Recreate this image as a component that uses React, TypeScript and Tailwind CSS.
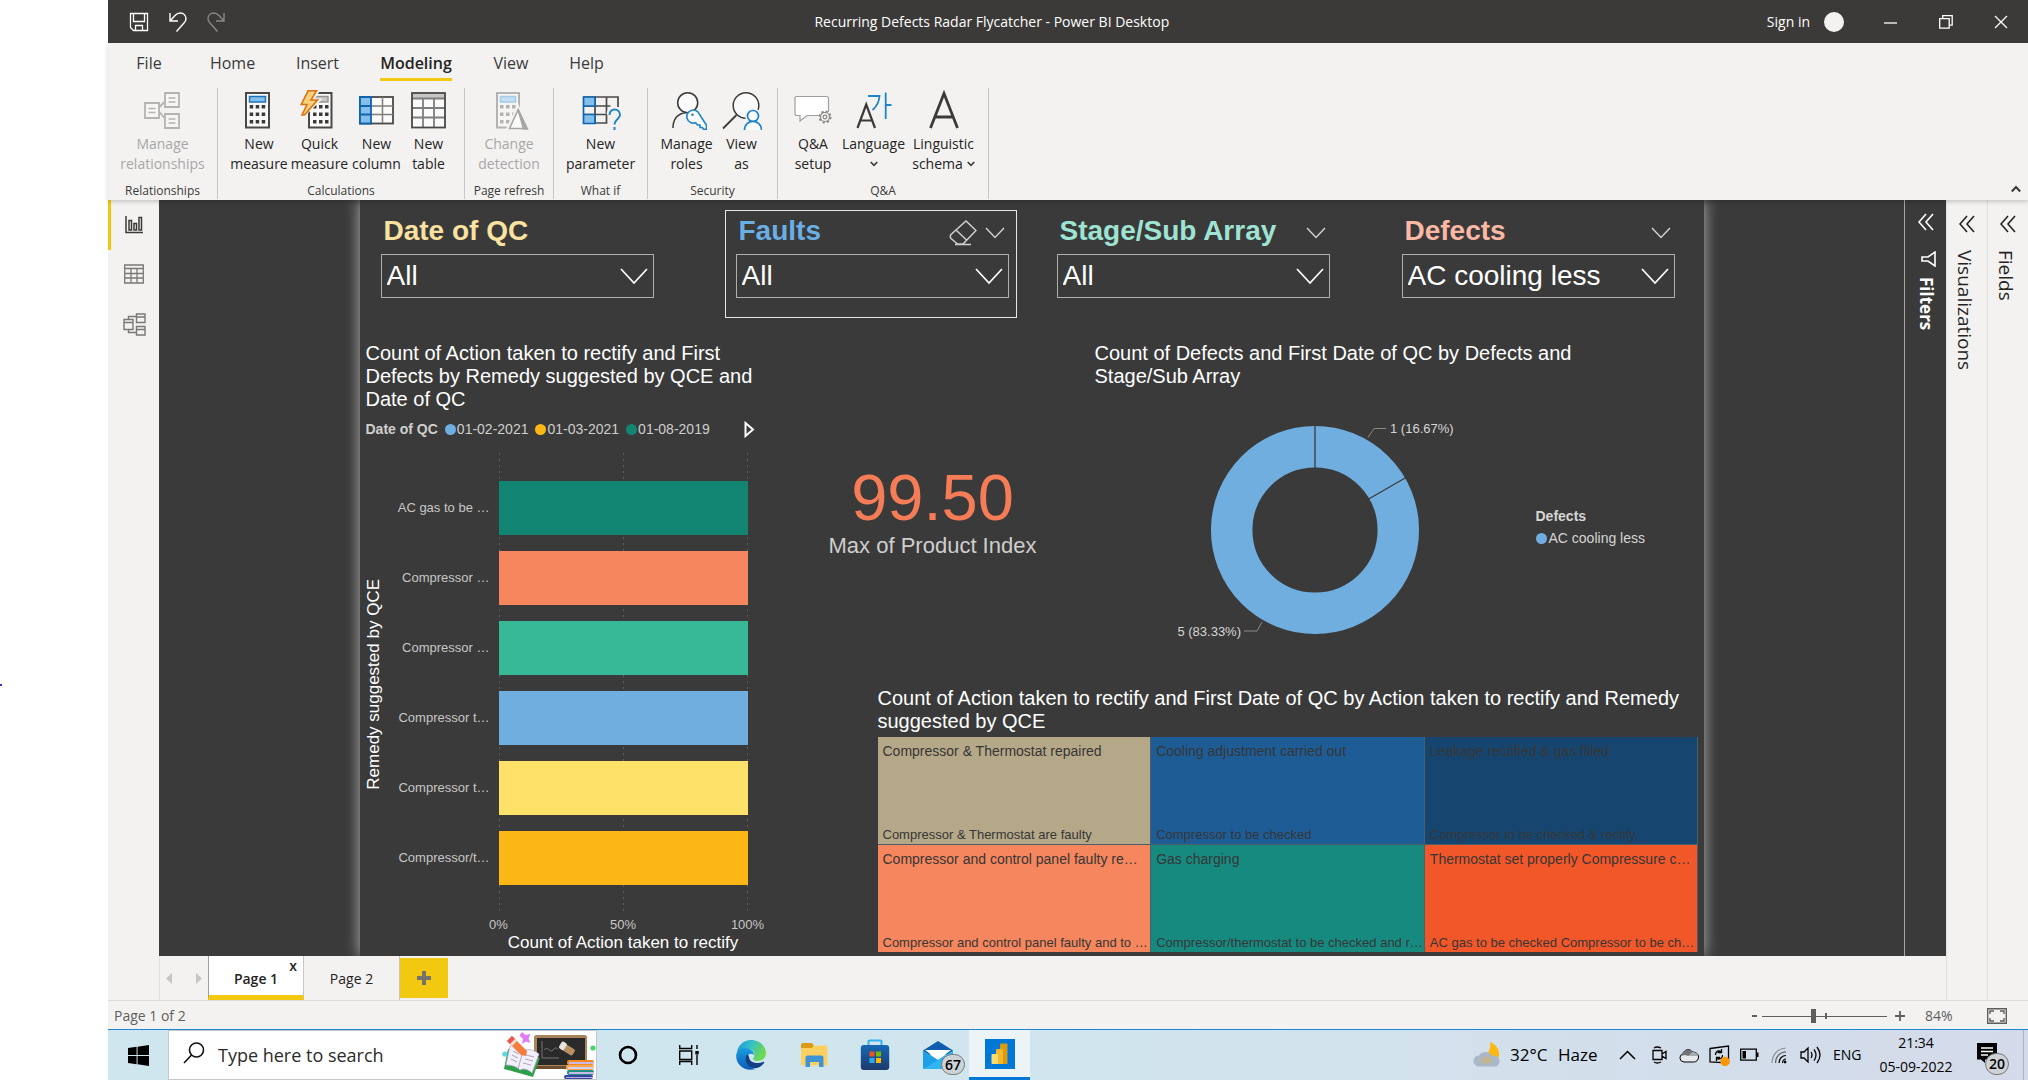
import React from "react";

type Children = { children?: React.ReactNode };

const INK = "#3b3a39";
const BLUE = "#1e84c8";

/* ---------- Title bar ---------- */

function TitleBar() {
  return (
    <header className="grid h-[43px] grid-cols-[705fr_auto_857fr] items-center bg-[#3b3a38] text-white">
      <div className="flex items-center gap-5 pl-[21px]">
        <button aria-label="Save">
          <svg width="20" height="20" viewBox="0 0 20 20" fill="none" stroke="#fff" strokeWidth="1.3">
            <path d="M1.5 1.5h17v17H4.5l-3-3zM4.5 1.5v8h11v-8M6.5 18.5v-5h7v5" />
          </svg>
        </button>
        <button aria-label="Undo">
          <svg width="18" height="20" viewBox="0 0 18 20" fill="none" stroke="#fff" strokeWidth="1.4">
            <path d="M1 1v8h8M1.5 8.5l4.500-5C8 1.300 10 1 11.500 1c3 0 5.500 2.500 5.500 5.500 0 2-.8 3.200-2 4.500l-7.500 8.500" />
          </svg>
        </button>
        <button aria-label="Redo" disabled>
          <svg width="18" height="20" viewBox="0 0 18 20" fill="none" stroke="#8a8886" strokeWidth="1.4">
            <path d="M17 1v8H9M16.500 8.500l-4.500-5C10 1.300 8 1 6.500 1 3.500 1 1 3.500 1 6.500c0 2 .8 3.200 2 4.500l7.500 8.500" />
          </svg>
        </button>
      </div>
      <h1 className="text-sm">Recurring Defects Radar Flycatcher - Power BI Desktop</h1>
      <div className="flex items-center justify-end pr-5">
        <button className="flex items-center gap-3.5 text-sm">
          Sign in
          <span className="size-5 rounded-full bg-[#f3f2f1]" />
        </button>
        <button aria-label="Minimize" className="ml-10">
          <svg width="14" height="14" viewBox="0 0 14 14" stroke="#fff" strokeWidth="1.3"><path d="M0 8h13" /></svg>
        </button>
        <button aria-label="Restore" className="ml-[41px]">
          <svg width="14" height="14" viewBox="0 0 14 14" fill="none" stroke="#fff" strokeWidth="1.3">
            <path d="M.7 3.700h9.500v9.500H.7zM3.700 3.700V.7h9.500v9.500h-3" />
          </svg>
        </button>
        <button aria-label="Close" className="ml-[41px]">
          <svg width="14" height="14" viewBox="0 0 14 14" stroke="#fff" strokeWidth="1.3"><path d="M1 1l12 12M13 1L1 13" /></svg>
        </button>
      </div>
    </header>
  );
}

/* ---------- Ribbon icons ---------- */

function Icon40({ children }: Children) {
  return (
    <svg width="40" height="40" viewBox="0 0 40 40" fill="none" strokeWidth="1.5" className="block">
      {children}
    </svg>
  );
}

function Dots({ x, color }: { x: number; color: string }) {
  return (
    <g fill={color}>
      {[15, 22.5, 30].map((y) =>
        [0, 6, 12].map((dx) => <rect key={`${y}-${dx}`} x={x + dx} y={y} width="3.500" height="3.500" />)
      )}
    </g>
  );
}

const RelationshipsIcon = () => (
  <Icon40>
    <g stroke="#b5b3b1" fill="#f6f5f4" strokeWidth="1.8">
      <path d="M15.500 18l6-6M15.500 21l6 7" />
      <path d="M2 13h14v15H2zM22 3h14v14H22zM22 24h14v14H22z" />
      <path d="M5.500 18.500h7M5.500 22.500h7M25.500 8h7M25.500 12h7M25.500 29h7M25.500 33h7" strokeWidth="1.3" />
    </g>
  </Icon40>
);
const MeasureIcon = () => (
  <Icon40>
    <rect x="7" y="3" width="23" height="34.500" fill="#fafafa" stroke="#4a4947" strokeWidth="2" />
    <rect x="10.500" y="6.500" width="16" height="5.500" fill="#83beec" stroke="#1e72b8" />
    <Dots x={10.7} color={INK} />
  </Icon40>
);
const QuickIcon = () => (
  <Icon40>
    <rect x="9" y="3" width="22.500" height="34.500" fill="#fafafa" stroke="#4a4947" strokeWidth="2" />
    <rect x="13" y="6.500" width="15" height="5.500" fill="#c8c6c4" stroke="#979593" />
    <Dots x={13} color={INK} />
    <path d="M10 0L2 14h7L2 26 18 10.500h-7L17.500 1z" fill="#f3f2f1" stroke="#f3f2f1" strokeWidth="4" />
    <path d="M8 .8L1.300 14.500H7L2 25h2.500L17.500 10H11L16.500 .8z" fill="#fbd07e" stroke="#d9730d" strokeWidth="1.600" />
  </Icon40>
);
const ColumnIcon = () => (
  <Icon40>
    <rect x="3" y="7" width="33" height="26.500" fill="#fafafa" stroke="#4a4947" strokeWidth="1.800" />
    <path d="M25.500 7v26M14 16h22M14 24.500h22" stroke="#807e7c" />
    <path d="M3 7h11v26.500H3zM3 16h11M3 24.500h11" fill="#83beec" stroke="#0f64ad" strokeWidth="1.800" />
  </Icon40>
);
const TableIcon = () => (
  <Icon40>
    <rect x="3" y="3" width="33" height="34.500" fill="#fafafa" />
    <rect x="3" y="3" width="33" height="5.500" fill="#c8c6c4" />
    <path d="M3 8.500h33M3 18h33M3 27.500h33M14 8.500v29M25 8.500v29" stroke="#807e7c" strokeWidth="1.800" />
    <rect x="3" y="3" width="33" height="34.500" stroke="#4a4947" strokeWidth="1.800" />
  </Icon40>
);
const DetectionIcon = () => (
  <Icon40>
    <rect x="8" y="3" width="22" height="34.500" fill="#f6f5f4" stroke="#b5b3b1" strokeWidth="2" />
    <rect x="11.500" y="6.500" width="15" height="5.500" fill="#c5dff2" stroke="#a5cbe6" />
    <Dots x={11} color="#b5b3b1" />
    <path d="M29 13L17 39h22z" fill="#f3f2f1" />
    <path d="M29 20L20.500 38.500H36z" fill="#fafafa" stroke="#a8a6a4" strokeWidth="1.600" />
    <path d="M29 19L38.500 39h-4z" fill="#a8a6a4" stroke="#a8a6a4" />
  </Icon40>
);
const ParameterIcon = () => (
  <Icon40>
    <path d="M2.500 7H37v10M2.500 33H25.500V7M2.500 16h27M2.500 24.500h23M14 7v26" stroke="#4a4947" strokeWidth="1.700" fill="none" />
    <path d="M2.500 7H14v9H2.500zM2.500 24.500H14V33.500H2.500zM2.500 16v9" fill="#83beec" stroke="#0f64ad" strokeWidth="1.700" />
    <path d="M28.500 24.500c0-7 10.500-6.500 10.500 0 0 4-5.500 4.500-5.500 10" stroke="#f3f2f1" strokeWidth="6" />
    <path d="M28.500 25c0-7.500 10.500-7 10.500 0 0 4-5.500 4-5.500 9.500M33.500 37v3" stroke={BLUE} strokeWidth="2" />
  </Icon40>
);
const RolesIcon = () => (
  <Icon40>
    <g transform="translate(3 0)">
      <circle cx="17.700" cy="12.700" r="10" fill="#fafafa" stroke={INK} />
      <path d="M3 38c0-9 5-15 13-15.300" stroke={INK} />
      <path d="M29.500 24.500a6.500 6.500 0 1 0-4 8.200l2 2.300h2.500v2.500h2.500l1 1.800h3v-4z" fill="#fafafa" stroke={BLUE} strokeWidth="1.600" />
      <circle cx="22.500" cy="24.700" r="1.300" fill={BLUE} />
    </g>
  </Icon40>
);
const ViewAsIcon = () => (
  <Icon40>
    <circle cx="24" cy="15.500" r="12.800" fill="#fafafa" stroke={INK} />
    <path d="M14.500 25L1 38.500" stroke={INK} strokeWidth="1.800" />
    <circle cx="31" cy="26" r="8" fill="#f3f2f1" />
    <circle cx="31" cy="26" r="5.500" fill="#fafafa" stroke={BLUE} strokeWidth="1.700" />
    <path d="M22.500 40c0-11.500 17-11.500 17 0" fill="#fafafa" stroke={BLUE} strokeWidth="1.700" />
  </Icon40>
);
const QnaIcon = () => (
  <Icon40>
    <path d="M4 6.500h29.500q2 0 2 2v15q0 2-2 2H14L7 31v-5.500H4q-2 0-2-2v-15q0-2 2-2z" fill="#fff" stroke="#a19f9d" strokeWidth="1.200" />
    <circle cx="32" cy="27" r="6.500" fill="#f3f2f1" />
    <circle cx="32" cy="27" r="5.500" stroke="#8a8886" strokeWidth="2" strokeDasharray="2.160 2.160" />
    <circle cx="32" cy="27" r="4.500" fill="#f3f2f1" stroke="#8a8886" strokeWidth="1.200" />
    <circle cx="32" cy="27" r="1.800" stroke="#8a8886" strokeWidth="1.200" />
  </Icon40>
);
const LanguageIcon = () => (
  <Icon40>
    <path d="M3.500 38L12.200 14.500 21 38M6.500 30.500h11.500" stroke={INK} strokeWidth="2.200" />
    <path d="M14 6H25.500C25 13 22 17 18.500 20M31.700 2.500V29M31.700 15H37.500" stroke={BLUE} strokeWidth="1.800" />
  </Icon40>
);
const LinguisticIcon = () => (
  <Icon40>
    <path d="M6.500 38L20 3.500 33.500 38M11 27h18" stroke={INK} strokeWidth="2.800" />
  </Icon40>
);

const SmallChevron = ({ className = "" }: { className?: string }) => (
  <svg width="8" height="6" viewBox="0 0 8 6" fill="none" stroke={INK} strokeWidth="1.600" className={className}>
    <path d="M.7 1l3.300 3.300L7.300 1" />
  </svg>
);

/* ---------- Ribbon ---------- */

function RibbonGroup({ label, width, children }: Children & { label: string; width: string }) {
  return (
    <section className={`flex flex-col items-center justify-between border-r border-[#c8c6c4] ${width}`}>
      <div className="flex">{children}</div>
      <div className="text-xs leading-4 text-[#3b3a39]">{label}</div>
    </section>
  );
}

function RibbonButton({
  icon, lines, width, disabled, children,
}: Children & { icon: React.ReactNode; lines: string[]; width: string; disabled?: boolean }) {
  return (
    <button
      disabled={disabled}
      className={`flex flex-col items-center text-sm leading-5 whitespace-nowrap ${width} ${disabled ? "text-[#a9a7a5]" : "text-[#252423]"}`}
    >
      <span className="mt-0.5 mb-1">{icon}</span>
      <span>{lines[0]}</span>
      <span className="flex min-h-5 items-center gap-1">
        {lines[1]}
        {children}
      </span>
    </button>
  );
}

function Ribbon() {
  const tabs = [
    { t: "File", c: "w-[82px]" },
    { t: "Home", c: "w-[85px]" },
    { t: "Insert", c: "w-[85px]" },
    { t: "Modeling", c: "w-[112px]", on: true },
    { t: "View", c: "w-[78px]" },
    { t: "Help", c: "w-[73px]" },
  ];
  return (
    <div className="relative z-10 h-[157px] bg-[#f3f2f1] shadow-[0_2px_4px_rgba(0,0,0,0.18)]">
      <nav className="flex h-[45px]">
        {tabs.map((x) => (
          <button key={x.t} className={`flex justify-center pt-1.5 text-base text-[#3b3a39] ${x.c}`}>
            <span className={`h-[32px] pt-0.5 ${x.on ? "border-b-[3px] border-[#f2c811] font-semibold text-[#252423]" : ""}`}>{x.t}</span>
          </button>
        ))}
      </nav>
      <div className="flex h-[112px] pb-px">
        <RibbonGroup label="Relationships" width="w-[110px]">
          <RibbonButton icon={<RelationshipsIcon />} lines={["Manage", "relationships"]} width="w-[100px]" disabled />
        </RibbonGroup>
        <RibbonGroup label="Calculations" width="w-[247px]">
          <RibbonButton icon={<MeasureIcon />} lines={["New", "measure"]} width="w-[61px]" />
          <RibbonButton icon={<QuickIcon />} lines={["Quick", "measure"]} width="w-[60px]" />
          <RibbonButton icon={<ColumnIcon />} lines={["New", "column"]} width="w-[54px]" />
          <RibbonButton icon={<TableIcon />} lines={["New", "table"]} width="w-[50px]" />
        </RibbonGroup>
        <RibbonGroup label="Page refresh" width="w-[89px]">
          <RibbonButton icon={<DetectionIcon />} lines={["Change", "detection"]} width="w-[70px]" disabled />
        </RibbonGroup>
        <RibbonGroup label="What if" width="w-[94px]">
          <RibbonButton icon={<ParameterIcon />} lines={["New", "parameter"]} width="w-[80px]" />
        </RibbonGroup>
        <RibbonGroup label="Security" width="w-[130px]">
          <RibbonButton icon={<RolesIcon />} lines={["Manage", "roles"]} width="w-[58px]" />
          <RibbonButton icon={<ViewAsIcon />} lines={["View", "as"]} width="w-[52px]" />
        </RibbonGroup>
        <RibbonGroup label="Q&A" width="w-[211px]">
          <RibbonButton icon={<QnaIcon />} lines={["Q&A", "setup"]} width="w-[50px]" />
          <RibbonButton icon={<LanguageIcon />} lines={["Language", ""]} width="w-[71px]"><SmallChevron /></RibbonButton>
          <RibbonButton icon={<LinguisticIcon />} lines={["Linguistic", "schema"]} width="w-[69px]"><SmallChevron /></RibbonButton>
        </RibbonGroup>
        <button aria-label="Collapse the ribbon" className="mt-auto mr-[7px] mb-1.5 ml-auto">
          <svg width="10" height="8" viewBox="0 0 10 8" fill="none" stroke={INK} strokeWidth="2"><path d="M.8 6.500L5 2l4.200 4.500" /></svg>
        </button>
      </div>
    </div>
  );
}

/* ---------- Left rail ---------- */

function Rail() {
  return (
    <nav className="flex w-[51px] shrink-0 flex-col bg-[#f3f2f1]">
      <button aria-label="Report view" className="flex h-[50px] items-center border-l-[3px] border-[#f2c811] pl-[14px]">
        <svg width="18" height="18" viewBox="0 0 18 18" fill="none" stroke={INK} strokeWidth="1.500">
          <path d="M1 0v16.500h17M4 4.500h2.500v9.500H4zM9 7.500h2.500V14H9zM14 1.500h2.500V14H14z" />
        </svg>
      </button>
      <button aria-label="Data view" className="flex h-[48px] items-center pl-4">
        <svg width="20" height="20" viewBox="0 0 20 20" fill="none" stroke="#7a7876" strokeWidth="1.300">
          <path d="M.7 1h18.600v18H.7zM.7 4.500h18.600M.7 9.500h18.600M.7 14h18.600M7 4.500V19M13 4.500V19" />
        </svg>
      </button>
      <button aria-label="Model view" className="flex h-[53px] items-center pl-[15px]">
        <svg width="23" height="23" viewBox="0 0 23 23" fill="none" stroke="#7a7876" strokeWidth="1.400">
          <path d="M1 6.500h9v10H1zM1 9.500h9M13.500 1H22v8.500h-8.500zM13.500 4H22M13.500 13.500H22V22h-8.500zM13.500 16.500H22M5.500 6.500v-3h8M5.500 16.500v3h8" />
        </svg>
      </button>
    </nav>
  );
}

/* ---------- Report canvas ---------- */

function Slicer({ title, color, value, className, selected, menu = true }: {
  title: string; color: string; value: string; className: string; selected?: boolean; menu?: boolean;
}) {
  const id = title.replace(/\W/g, "");
  return (
    <section className={`h-[108px] w-[292px] shrink-0 border pr-[7px] pl-2.5 ${selected ? "border-[#e6e6e6]" : "border-transparent"} ${className}`}>
      <div className="flex h-[43px] items-center pr-1 pb-1 pl-[3px]">
        <label htmlFor={id} className={`text-[28px] leading-8 font-bold ${color}`}>{title}</label>
        <span className="ml-auto flex items-center gap-2 pt-1">
          {selected && (
            <button aria-label="Clear selections">
              <svg width="28" height="26" viewBox="0 0 28 26" fill="none" stroke="#d0cfce" strokeWidth="1.500">
                <path d="M8.500 24L2 18.500q-1.500-2 0-4L17 1l10 9.500L14 24zM7.500 10.500l10 9.500M6 24.500h16" />
              </svg>
            </button>
          )}
          {menu && (
            <button aria-label="More options">
              <svg width="20" height="12" viewBox="0 0 20 12" fill="none" stroke="#d0cfce" strokeWidth="1.500"><path d="M1 1l9 9.500L19 1" /></svg>
            </button>
          )}
        </span>
      </div>
      <div className="relative h-[44px]">
        <select id={id} className="h-full w-full appearance-none border border-[#b0afae] bg-transparent pl-[5px] text-[28px] leading-8 text-white">
          <option>{value}</option>
        </select>
        <svg width="28" height="17" viewBox="0 0 28 17" fill="none" stroke="#fff" strokeWidth="1.700" className="pointer-events-none absolute top-3.5 right-1.5">
          <path d="M1 1l13 14L27 1" />
        </svg>
      </div>
    </section>
  );
}

const bars = [
  { label: "AC gas to be …", bg: "bg-[#118472]" },
  { label: "Compressor …", bg: "bg-[#f5865d]" },
  { label: "Compressor …", bg: "bg-[#37b897]" },
  { label: "Compressor t…", bg: "bg-[#70aee0]" },
  { label: "Compressor t…", bg: "bg-[#fde168]" },
  { label: "Compressor/t…", bg: "bg-[#fcb714]" },
];

function BarChart() {
  return (
    <section className="w-[405px] shrink-0 pl-1.5">
      <h2 className="text-[20px] leading-[23px] text-white">
        Count of Action taken to rectify and First<br />Defects by Remedy suggested by QCE and<br />Date of QC
      </h2>
      <div className="mt-2 flex h-5 items-center text-sm text-[#cfcecd]">
        <b>Date of QC</b>
        {[["01-02-2021", "bg-[#70aee0]"], ["01-03-2021", "bg-[#fcb714]"], ["01-08-2019", "bg-[#118472]"]].map(([d, c]) => (
          <span key={d} className="ml-[7px] flex items-center gap-px">
            <i className={`size-[11px] rounded-full ${c}`} />{d}
          </span>
        ))}
        <button aria-label="Next legend items" className="mr-2.5 ml-auto">
          <svg width="11" height="17" viewBox="0 0 11 17" fill="none" stroke="#fff" strokeWidth="2"><path d="M1.500 2v13L9 8.500z" /></svg>
        </button>
      </div>
      <div className="mt-[14px] flex h-[459px]">
        <div className="flex w-[17px] items-center justify-center pt-1">
          <span className="rotate-180 text-[17px] leading-5 whitespace-nowrap text-white [writing-mode:vertical-rl]">Remedy suggested by QCE</span>
        </div>
        <ul className="flex w-[107px] flex-col gap-4 pt-7 text-right text-[13px] text-[#c8c7c6]">
          {bars.map((b, i) => <li key={i} className="flex h-[54px] items-center justify-end">{b.label}</li>)}
        </ul>
        <div className="relative ml-[9px] flex w-[249px] flex-col gap-4 pt-7">
          <div className="absolute inset-0 flex justify-between">
            {[0, 50, 100].map((p) => (
              <i key={p} className="w-px [background:repeating-linear-gradient(#5c5c5c_0_2px,transparent_2px_6px)]" />
            ))}
          </div>
          {bars.map((b, i) => <div key={i} className={`relative h-[54px] ${b.bg}`} />)}
        </div>
      </div>
      <div className="mt-1 ml-[113px] flex w-[289px] justify-between text-[13px] leading-[18px] text-[#c8c7c6]">
        {["0%", "50%", "100%"].map((t) => <span key={t} className="w-10 text-center">{t}</span>)}
      </div>
      <div className="ml-[133px] w-[249px] text-center text-[17px] leading-[18px] text-white">Count of Action taken to rectify</div>
    </section>
  );
}

function Donut() {
  return (
    <svg width="290" height="230" viewBox="0 0 290 230" className="shrink-0">
      <circle cx="145" cy="114" r="83.300" fill="none" stroke="#70aee0" strokeWidth="41.500" />
      <path d="M145 10v43M198.700 83L236 61.500" stroke="#3a3a3a" strokeWidth="1.300" />
      <path d="M198 21.500l6-9h12M92 206l-5 9H74" fill="none" stroke="#8a8988" />
      <g fontSize="13" fill="#d6d5d4">
        <text x="220" y="17">1 (16.67%)</text>
        <text x="71" y="220" textAnchor="end">5 (83.33%)</text>
      </g>
    </svg>
  );
}

const tiles = [
  { a: "Compressor & Thermostat repaired", b: "Compressor & Thermostat are faulty", bg: "bg-[#b5a888]" },
  { a: "Cooling adjustment carried out", b: "Compressor to be checked", bg: "bg-[#1e5c96]" },
  { a: "Leakage rectified & gas filled", b: "Compressor to be checked & rectify", bg: "bg-[#164670]" },
  { a: "Compressor and control panel faulty re…", b: "Compressor and control panel faulty and to …", bg: "bg-[#f5865d]" },
  { a: "Gas charging", b: "Compressor/thermostat to be checked and r…", bg: "bg-[#178a80]" },
  { a: "Thermostat set properly Compressure c…", b: "AC gas to be checked Compressor to be ch…", bg: "bg-[#f2572a]" },
];

function Report() {
  return (
    <div className="mx-auto w-full max-w-[1344px] bg-[#3a3a3a] pt-2.5 font-['Liberation_Sans',Arial,sans-serif] shadow-[0_0_14px_rgba(190,190,190,0.95)]">
      <div className="flex">
        <Slicer title="Date of QC" color="text-[#fbe2a0]" value="All" className="ml-2.5" menu={false} />
        <Slicer title="Faults" color="text-[#6aaee4]" value="All" className="ml-[63px]" selected />
        <Slicer title="Stage/Sub Array" color="text-[#9fe3d3]" value="All" className="ml-[29px]" />
        <Slicer title="Defects" color="text-[#fbb9a5]" value="AC cooling less" className="ml-[53px]" />
      </div>
      <div className="mt-6 flex">
        <BarChart />
        <div className="flex min-w-0 flex-1 flex-col">
          <div className="flex h-[345px]">
            <section className="w-[330px] shrink-0 pt-[124px] pl-1.5 text-center">
              <p className="text-[65px] leading-[64px] text-[#f47c57]">99.50</p>
              <p className="mt-0.5 text-[22px] leading-7 text-[#cfcecd]">Max of Product Index</p>
            </section>
            <section className="min-w-0 flex-1">
              <h2 className="text-[20px] leading-[23px] whitespace-nowrap text-white">
                Count of Defects and First Date of QC by Defects and<br />Stage/Sub Array
              </h2>
              <div className="mt-7 flex pl-[75px]">
                <Donut />
                <div className="ml-[76px] pt-[89px] text-sm leading-[22px] whitespace-nowrap text-[#d6d5d4]">
                  <b>Defects</b>
                  <div className="flex items-center gap-0.5"><i className="size-[11px] rounded-full bg-[#70aee0]" />AC cooling less</div>
                </div>
              </div>
            </section>
          </div>
          <section className="mr-1.5 ml-[113px]">
            <h2 className="text-[20px] leading-[23px] whitespace-nowrap text-white">
              Count of Action taken to rectify and First Date of QC by Action taken to rectify and Remedy<br />suggested by QCE
            </h2>
            <div className="mt-1 grid grid-cols-3 gap-px bg-[#4a5f68]">
              {tiles.map((t) => (
                <div key={t.a} className={`flex h-[107px] min-w-0 flex-col justify-between px-[5px] pt-1 whitespace-nowrap text-[#363636] ${t.bg}`}>
                  <span className="text-sm leading-5">{t.a}</span>
                  <span className="text-[13px] leading-[18px]">{t.b}</span>
                </div>
              ))}
            </div>
          </section>
        </div>
      </div>
    </div>
  );
}

/* ---------- Collapsed panes ---------- */

const DoubleChevron = () => (
  <svg width="16" height="18" viewBox="0 0 16 18" fill="none" stroke="currentColor" strokeWidth="1.600">
    <path d="M8 1L1 9l7 8M15 1L8 9l7 8" />
  </svg>
);

function SidePane({ name }: { name: string }) {
  return (
    <button className="flex w-[41px] shrink-0 flex-col items-center border-l border-[#e1dfdd] bg-[#f3f2f1] pt-[15px] text-[#252423]">
      <DoubleChevron />
      <span className="mt-[17px] mr-1 text-[19px] leading-6 font-medium [writing-mode:vertical-rl]">{name}</span>
    </button>
  );
}

/* ---------- Page tabs and status bar ---------- */

function PageTabs() {
  return (
    <div className="flex h-[44px] border-l border-[#e1dfdd] bg-[#f3f2f1] text-sm text-[#252423]">
      <div className="flex w-12 items-center justify-between px-1.5">
        <button aria-label="Previous page"><svg width="6" height="11" viewBox="0 0 6 11"><path d="M6 0v11L0 5.500z" fill="#c8c6c4" /></svg></button>
        <button aria-label="Next page"><svg width="6" height="11" viewBox="0 0 6 11"><path d="M0 0v11l6-5.500z" fill="#c8c6c4" /></svg></button>
      </div>
      <div className="relative flex w-24 border-r border-b-[5px] border-l border-r-[#c8c6c4] border-b-[#f2c811] border-l-[#a19f9d] bg-white">
        <button className="w-full pt-1.5 font-semibold">Page 1</button>
        <button aria-label="Delete page" className="absolute top-0.5 right-1.5 text-sm leading-4 font-semibold">x</button>
      </div>
      <button className="w-[96px] border-r border-[#c8c6c4] pt-px">Page 2</button>
      <button aria-label="New page" className="mt-0.5 flex h-10 w-12 items-center justify-center bg-[#f2c811]">
        <svg width="14" height="14" viewBox="0 0 14 14" stroke="#75736c" strokeWidth="4"><path d="M0 7h14M7 0v14" /></svg>
      </button>
    </div>
  );
}

function StatusBar() {
  return (
    <div className="flex h-[29px] items-center border-t border-[#dddbd9] bg-[#f3f2f1] pt-0.5 pr-[21px] pl-1.5 text-sm text-[#605e5c]">
      <span>Page 1 of 2</span>
      <button aria-label="Zoom out" className="ml-auto flex h-4 w-3 items-center justify-center">
        <i className="h-0.5 w-[5px] bg-[#605e5c]" />
      </button>
      <div className="relative mx-0.5 flex h-4 w-[125px] items-center">
        <input
          type="range" aria-label="Zoom" min="0" max="100" defaultValue="41"
          className="h-4 w-full appearance-none bg-transparent [&::-webkit-slider-runnable-track]:h-px [&::-webkit-slider-runnable-track]:bg-[#605e5c] [&::-webkit-slider-thumb]:-mt-[7px] [&::-webkit-slider-thumb]:h-[14px] [&::-webkit-slider-thumb]:w-[5px] [&::-webkit-slider-thumb]:appearance-none [&::-webkit-slider-thumb]:bg-[#605e5c]"
        />
        <i className="pointer-events-none absolute left-1/2 h-1.5 w-0.5 bg-[#605e5c]" />
      </div>
      <button aria-label="Zoom in" className="ml-1.5">
        <svg width="10" height="10" viewBox="0 0 10 10" stroke="#605e5c" strokeWidth="1.800"><path d="M0 5h10M5 0v10" /></svg>
      </button>
      <span className="ml-5 w-[31px]">84%</span>
      <button aria-label="Fit to page" className="ml-[31px]">
        <svg width="20" height="16" viewBox="0 0 20 16" fill="none" stroke="#605e5c" strokeWidth="1.400">
          <path d="M.7.7h18.600v14.600H.7zM3 6V3h4M13 3h4v3M17 10v3h-4M7 13H3v-3" />
        </svg>
      </button>
    </div>
  );
}

/* ---------- Taskbar ---------- */

const SearchArt = () => (
  <svg width="94" height="48" viewBox="0 0 94 48" className="shrink-0">
    <rect x="32" y="4" width="53" height="34" rx="2.500" fill="#a9845a" />
    <rect x="32" y="35" width="53" height="3" rx="1" fill="#6e4f2d" />
    <rect x="35" y="7" width="48" height="27" fill="#2a2a2a" />
    <path d="M40 10v17h17M42 19c4-5 6 4 9 0s4-1 5-1" stroke="#777" fill="none" />
    <g transform="rotate(32 66 18)"><rect x="60" y="15" width="13" height="7" rx="1.500" fill="#b98f5f" /><rect x="57" y="14" width="6" height="8" rx="2" fill="#e7e2da" /></g>
    <path d="M6 18L38 27 31 46 2 38z" fill="#2f9e4b" />
    <path d="M8 15c5-1 10 1 13 5 5-3 11-1 16 3l-7 19c-4-4-9-5-12-3-4-4-9-5-14-5z" fill="#f3effa" stroke="#b9add0" strokeWidth=".8" />
    <path d="M21 20l-5 18M11 20l6 3M10 24l6 3M9 28l6 3M24 24l8 2M23 28l8 2M21 32l8 2" stroke="#a59bb8" strokeWidth=".9" fill="none" />
    <path d="M5 10l5-5 15 15-1 5-5-1z" fill="#f47c3c" />
    <path d="M5 10l5-5 3 3-5 5z" fill="#f05252" />
    <path d="M8 13l5-5 2 2-5 5z" fill="#fbe0cf" />
    <path d="M20 1l3.500 3 5-1-2 4.500 2 4.500-4.500-1.500-4 2.500 1-5-3.500-3.500z" fill="#e07cf5" />
    <circle cx="2.800" cy="23" r="2.600" fill="#5fd6ea" />
    <circle cx="91" cy="17" r="2.600" fill="#49d36c" />
    <rect x="65" y="29" width="27" height="5" rx="2" fill="#f08a24" /><rect x="67" y="31" width="25" height="2" fill="#cbb8e8" />
    <rect x="64" y="34" width="28" height="5" rx="2" fill="#f9a94b" /><rect x="66" y="36" width="26" height="2" fill="#d9cdf0" />
    <rect x="65" y="39" width="27" height="5" rx="2" fill="#1f8f84" /><rect x="67" y="41" width="25" height="2" fill="#cbb8e8" />
    <rect x="62" y="44" width="29" height="4" rx="2" fill="#39459c" /><rect x="64" y="46" width="27" height="1" fill="#b4b0e0" />
  </svg>
);

const EdgeIcon = () => (
  <svg width="30" height="30" viewBox="0 0 30 30">
    <defs>
      <linearGradient id="e1" x1="0" y1="0" x2="1" y2=".4"><stop offset="0" stopColor="#1f8fd6" /><stop offset=".5" stopColor="#35c1c8" /><stop offset="1" stopColor="#6ed94e" /></linearGradient>
      <linearGradient id="e2" x1="0" y1="0" x2="0" y2="1"><stop offset="0" stopColor="#1b9de2" /><stop offset="1" stopColor="#0d5cb8" /></linearGradient>
    </defs>
    <path d="M1 12C2 5 8 0 15 0c8.500 0 15 6 15 13 0 5-4 8-8.500 8-4 0-5-1.500-4-3 2-3 1-8-5-9C7 8 3 9.500 1 12z" fill="url(#e1)" />
    <path d="M.2 15C1 10 5 7.500 10 8c5 .5 8 4 8 7-2-2-5-1.500-6.500 1-2.500 5 2 12 8 13C9 32-.5 25 .2 15z" fill="url(#e2)" />
    <path d="M11.500 14.500C8 17 9 26 17 28c5 .8 8.500-1.500 11-5 .6-.9 0-1.500-1-1-4.500 2-12 1-13.500-3-.7-2-.5-3.500-2-4.500z" fill="#123f86" />
  </svg>
);

const FolderIcon = () => (
  <svg width="28" height="26" viewBox="0 0 28 26">
    <path d="M1 3q0-2 2-2h9l2 3-2 3H1z" fill="#dc9b12" />
    <path d="M1 6h11l2-2.500h12q1.500 0 1.500 1.500v17q0 1.500-1.500 1.500H2.500Q1 23.500 1 22z" fill="#fdd161" />
    <path d="M5.500 25V15.500q0-2 2-2h14q2 0 2 2V25h-4.500v-5h-9v5z" fill="#3f93d5" />
  </svg>
);

const StoreIcon = () => (
  <svg width="30" height="32" viewBox="0 0 30 32">
    <defs><linearGradient id="s1" x1="0" y1="0" x2="0" y2="1"><stop offset="0" stopColor="#1668b5" /><stop offset="1" stopColor="#1d3a6b" /></linearGradient></defs>
    <path d="M8.500 6V2.500q0-1 1-1h11q1 0 1 1V6" fill="none" stroke="#35b1ee" strokeWidth="2" />
    <rect x=".8" y="6" width="28.400" height="25" rx="3" fill="url(#s1)" />
    <path d="M9.500 12.500h5v5h-5z" fill="#f25022" /><path d="M16 12.500h5v5h-5z" fill="#7fba00" />
    <path d="M9.500 19h5v5h-5z" fill="#2fa9ee" /><path d="M16 19h5v5h-5z" fill="#ffb900" />
  </svg>
);

function CountBadge({ n, className }: { n: string; className: string }) {
  return (
    <span className={`absolute flex items-center justify-center rounded-full border border-[#777] bg-[#cdd2d6] text-sm leading-4 font-semibold text-black ${className}`}>{n}</span>
  );
}

function Taskbar() {
  return (
    <footer className="flex h-[51px] items-stretch border-t border-[#1988d4] bg-linear-to-r from-[#cfe6ee] via-[#d0e5ee] to-[#d4dae9] text-black">
      <button aria-label="Start" className="flex w-[60px] items-center justify-center">
        <svg width="21" height="21" viewBox="0 0 22 22"><path d="M0 3.200l9-1.300v8.600H0zM10 1.800L22 0v10.500H10zM0 11.500h9v8.600l-9-1.300zM10 11.500h12V22l-12-1.800z" /></svg>
      </button>
      <div className="flex w-[429px] items-center border border-[#c4c8ca] bg-white pl-3.5">
        <svg width="22" height="22" viewBox="0 0 22 22" fill="none" stroke="#111" strokeWidth="1.600" className="mb-1 shrink-0">
          <circle cx="13.500" cy="8" r="7" /><path d="M8.500 13L1 21" />
        </svg>
        <input aria-label="Search" placeholder="Type here to search" className="ml-[13px] w-0 flex-1 text-[18px] outline-none placeholder:text-[#2b2b2b]" />
        <SearchArt />
      </div>
      <button aria-label="Cortana" className="flex w-[62px] items-center justify-center">
        <svg width="20" height="20" viewBox="0 0 20 20" fill="none" stroke="#000" strokeWidth="2.600"><circle cx="10" cy="10" r="8" /></svg>
      </button>
      <button aria-label="Task view" className="flex w-[60px] items-center justify-center">
        <svg width="20" height="20" viewBox="0 0 20 20" fill="none" stroke="#000" strokeWidth="1.400">
          <path d="M.7 0v3.500h12V0M.7 6h12v8.500H.7zM.7 20v-3.500h12V20M18 0v4M18 10v10" /><path d="M18 6v3.500" strokeWidth="3.400" />
        </svg>
      </button>
      <button aria-label="Edge" className="flex w-[64px] items-center justify-center"><EdgeIcon /></button>
      <button aria-label="File Explorer" className="flex w-[61px] items-center justify-center"><FolderIcon /></button>
      <button aria-label="Store" className="flex w-[62px] items-center justify-center"><StoreIcon /></button>
      <button aria-label="Mail" className="relative flex w-[63px] items-center justify-center">
        <svg width="30" height="28" viewBox="0 0 30 28">
          <path d="M0 9.500L15 0l15 9.500v4H0z" fill="#0f5fae" /><path d="M2 9h26L15 19z" fill="#fff" />
          <path d="M0 9.500L15 19 30 9.500V27q0 1-1 1H1q-1 0-1-1z" fill="#1f9fe6" /><path d="M0 28l15-9L30 9.500V27q0 1-1 1z" fill="#2fb5f2" />
        </svg>
        <CountBadge n="67" className="top-6 right-1 h-[21px] w-6" />
      </button>
      <button aria-label="Power BI Desktop" className="flex w-[61px] items-center justify-center border-b-[3px] border-[#0078d7] bg-[#ecf4f8]">
        <svg width="30" height="30" viewBox="0 0 30 30">
          <path d="M0 0h30v30H0z" fill="#0078d7" />
          <path d="M15 5.500q0-1 1-1h5.500q1 0 1 1V25H15z" fill="#dc9a10" />
          <path d="M11 11q0-1 1-1h5q1 0 1 1v14h-7z" fill="#f2b92a" />
          <path d="M6.500 16q0-1 1-1H12q1 0 1 1v9H7.500q-1 0-1-1z" fill="#fbdc6a" />
        </svg>
      </button>

      <div className="ml-auto flex items-center text-[17px]">
        <button className="flex items-center">
          <svg width="27" height="26" viewBox="0 0 27 26">
            <path d="M17 0c6 2 10 8 9 14-1 4-3 6-7 8l-7-9c4-2 6-7 5-13z" fill="#fdb913" />
            <path d="M6 24.500a5.500 5.500 0 0 1 0-11C8 9 17 8.500 19 14c5-1 8 2.500 7.500 6s-3 4.500-6 4.500z" fill="#a9b7c9" />
            <path d="M7 18c3-5 11-5 13 0-2 5-10 6-13 0z" fill="#c9b583" opacity=".7" />
          </svg>
          <span className="ml-[10px] w-12 text-left">32°C</span>
          <span className="w-[46px] text-left">Haze</span>
        </button>
        <button aria-label="Show hidden icons" className="ml-[15px]">
          <svg width="17" height="10" viewBox="0 0 17 10" fill="none" stroke="#000" strokeWidth="1.500"><path d="M1 9l7.500-7.500L16 9" /></svg>
        </button>
        <svg width="15" height="18" viewBox="0 0 15 18" fill="none" stroke="#000" strokeWidth="1.300" className="ml-4">
          <path d="M1 4.500h9v9H1zM10 8l4-2.500v7L10 10M2 2q3-2 7 0M2 16q3 2 7 0" />
        </svg>
        <svg width="20" height="15" viewBox="0 0 20 15" className="ml-3" stroke="#000" strokeWidth="1">
          <path d="M5 14a4.300 4.300 0 0 1-1-8.400C5 1.500 11 0 13.500 4c3.500 0 6 2 6 5s-2 5-5 5z" fill="#e7e9ec" />
          <path d="M1.500 8C4 1.500 11 0 13.500 4l-4 4-3.500-1z" fill="#6f7276" stroke="none" />
          <path d="M9.500 8l4-4c3 0 5 1.500 5.500 4z" fill="#a9acb0" stroke="none" />
        </svg>
        <svg width="22" height="21" viewBox="0 0 22 21" fill="none" stroke="#000" strokeWidth="1.300" className="ml-2.5">
          <path d="M1 3.500L19.500 1v17L1 17zM6.500 10q0-4 4-4l2 1M12.500 4v3.500H9M13.500 10q0 4-4 4l-2-1M7.500 16v-3.500H11" />
          <circle cx="16" cy="16.500" r="4.700" fill="#ff9500" stroke="none" />
        </svg>
        <svg width="19" height="14" viewBox="0 0 19 14" className="ml-[9px]">
          <path d="M.7 1.200h15.600v11H.7z" fill="none" stroke="#000" strokeWidth="1.300" /><path d="M2.500 3H6v7.500H2.500zM17 4.500h1.500v4.500H17z" />
        </svg>
        <svg width="17" height="17" viewBox="0 0 17 17" fill="none" stroke="#000" strokeWidth="1.200" className="ml-3">
          <path d="M1 16C1 8 7 1 15 1" stroke="#8d939c" /><path d="M4.500 16C4.500 10 9 4.800 15 4.800" stroke="#666" /><path d="M8 16c0-4 3-7.500 7-7.500M11.500 16c0-2 1.500-4 3.500-4" /><circle cx="14" cy="15" r="1.400" fill="#000" stroke="none" />
        </svg>
        <svg width="21" height="20" viewBox="0 0 21 20" fill="none" stroke="#000" strokeWidth="1.300" className="ml-3">
          <path d="M1 7h3l4-4v14l-4-4H1zM11 7q2 3 0 6M14 4.500q4 5.500 0 11M17 2q6 8 0 16" />
        </svg>
        <span className="ml-3 w-[30px] text-sm">ENG</span>
        <div className="ml-3 w-[82px] text-center text-sm leading-6">21:34<br />05-09-2022</div>
        <button aria-label="Notifications" className="relative ml-5 h-full w-[46px]">
          <svg width="20" height="20" viewBox="0 0 20 20" className="mb-1">
            <path d="M0 0h20v16.500H8V20l-4-3.500H0z" /><path d="M4 5h12M4 8.500h12M4 12h7" stroke="#fff" strokeWidth="1.300" />
          </svg>
          <CountBadge n="20" className="top-[23px] left-2 h-[22px] w-6" />
        </button>
        <i className="mr-1 h-full border-l border-[#aab2c0]" />
      </div>
    </footer>
  );
}

export default function App() {
  return (
    <div className="flex min-h-screen bg-white font-['Open_Sans','Noto_Sans',sans-serif]">
      <aside className="flex w-[108px] shrink-0 items-end pb-[394px]">
        <i className="size-0.5 bg-[#3a35c8]" />
      </aside>
      <div className="flex min-w-0 flex-1 flex-col">
        <TitleBar />
        <Ribbon />
        <div className="flex flex-1">
          <Rail />
          <div className="flex min-w-0 flex-1 flex-col">
            <main className="flex min-h-[756px] flex-1 bg-[#3a3a3a]">
              <div className="flex min-w-0 flex-1 overflow-hidden"><Report /></div>
              <button className="flex w-[42px] shrink-0 flex-col items-center border-l border-[#a6a5a4] pt-[13px] text-white">
                <DoubleChevron />
                <svg width="17" height="16" viewBox="0 0 17 16" fill="none" stroke="currentColor" strokeWidth="1.600" className="mt-5 ml-1.5">
                  <path d="M15 1v14L8 10H2V6h6z" />
                </svg>
                <span className="mt-2.5 text-[17px] leading-6 font-bold [writing-mode:vertical-rl]">Filters</span>
              </button>
            </main>
            <PageTabs />
          </div>
          <SidePane name="Visualizations" />
          <SidePane name="Fields" />
        </div>
        <StatusBar />
        <Taskbar />
      </div>
    </div>
  );
}
